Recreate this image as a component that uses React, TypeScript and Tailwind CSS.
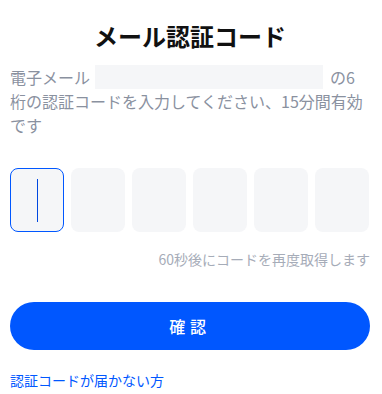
import * as React from "react";

const DIGITS = 6;

export default function App() {
    const [code] = React.useState<string[]>(Array(DIGITS).fill(""));

    return (
        <div
            className="w-[382px] h-[394px] bg-white pl-[10px] pr-[12px] pt-5 overflow-hidden"
            style={{ fontFamily: '"Noto Sans CJK JP", "Noto Sans", sans-serif' }}
        >
            <h1 className="text-center text-2xl leading-8 font-bold text-[#111111]">
                メール認証コード
            </h1>

            <p className="mt-[13px] text-base leading-6 text-[#8a919f]">
                電子メール
                <span className="inline-block align-top w-[228px] h-6 ml-[5px] mr-[7px] bg-[#f5f6f8]" />
                の6桁の認証コードを入力してください、15分間有効です
            </p>

            <div className="mt-[31px] flex gap-[7px]">
                {code.map((v, i) => (
                    <div
                        key={i}
                        className={
                            i === 0
                                ? "w-[54px] h-16 rounded-lg bg-[#f5f6f8] border border-[#0057ff] flex items-center justify-center"
                                : "w-[54px] h-16 rounded-lg bg-[#f5f6f8] flex items-center justify-center"
                        }
                    >
                        {i === 0 && !v && <span className="block w-px h-[43px] bg-[#0048e0]" />}
                        {v}
                    </div>
                ))}
            </div>

            <p className="mt-[17px] text-right text-sm leading-5 text-[#a6acb8]">
                60秒後にコードを再度取得します
            </p>

            <button className="mt-[33px] w-full h-12 rounded-full bg-[#0057ff] text-white text-base font-medium tracking-[0.3em]">
                確認
            </button>

            <a className="block mt-5 text-sm leading-5 text-[#0057ff]">認証コードが届かない方</a>
        </div>
    );
}
